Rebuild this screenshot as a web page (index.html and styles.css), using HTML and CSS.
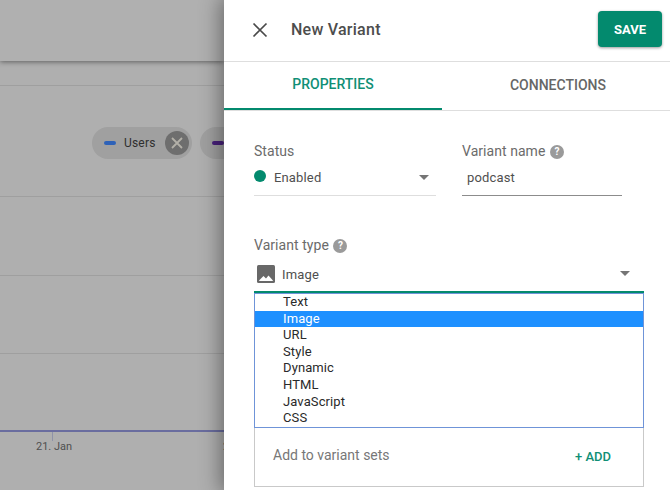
FILE: index.html
```html
<!DOCTYPE html>
<html lang="en">
<head>
<meta charset="utf-8">
<title>New Variant</title>
<link rel="stylesheet" href="styles.css">
</head>
<body>
<div class="app">
  <main class="chart">
    <div class="topbar"></div>
    <div class="band band-a"></div>
    <div class="band band-b">
      <div class="chips">
        <div class="chip">
          <span class="dash dash-blue"></span><span class="chip-label">Users</span>
          <span class="chip-close"><svg width="14" height="14" viewBox="0 0 14 14"><path d="M2 2 12 12M12 2 2 12" stroke="#b3b0a8" stroke-width="1.8" fill="none"/></svg></span>
        </div>
        <div class="chip chip-second"><span class="dash dash-purple"></span></div>
      </div>
    </div>
    <div class="band band-c"></div>
    <div class="band band-d"></div>
    <div class="band band-e"></div>
    <div class="axis">
      <div class="tick-group"><span class="tick"></span><span class="tick-label">21. Jan</span></div>
      <span class="tick-label next">2</span>
    </div>
  </main>

  <aside class="panel">
    <header class="panel-head">
      <svg class="close-icon" width="16" height="16" viewBox="0 0 16 16"><path d="M1.5 1.5 14.500 14.500M14.500 1.500 1.500 14.500" stroke="#4a4a4a" stroke-width="1.700" fill="none"/></svg>
      <h1 class="panel-title">New Variant</h1>
      <button class="save">SAVE</button>
    </header>
    <nav class="tabs">
      <div class="tab tab-active">PROPERTIES</div>
      <div class="tab tab-other">CONNECTIONS</div>
    </nav>
    <section class="form">
      <div class="row">
        <div class="field field-status">
          <div class="label">Status</div>
          <div class="control control-status">
            <span class="dot"></span><span class="value">Enabled</span><span class="caret"></span>
          </div>
        </div>
        <div class="field field-name">
          <div class="label">Variant name <span class="help">?</span></div>
          <div class="control control-name"><span class="value">podcast</span></div>
        </div>
      </div>
      <div class="label label-type">Variant type <span class="help">?</span></div>
      <div class="type-select">
        <svg class="image-icon" width="18" height="18" viewBox="0 0 18 18"><rect width="18" height="18" rx="1.500" fill="#686868"/><path d="M2 16 2.500 15 6.500 11 9 13.500 11.500 10.500 15.500 15 16 16Z" fill="#fff"/></svg>
        <span class="value">Image</span><span class="caret"></span>
      </div>
      <div class="listbox-wrap">
        <ul class="listbox">
          <li>Text</li>
          <li class="selected">Image</li>
          <li>URL</li>
          <li>Style</li>
          <li>Dynamic</li>
          <li>HTML</li>
          <li>JavaScript</li>
          <li>CSS</li>
        </ul>
        <div class="sets">
          <span class="sets-label">Add to variant sets</span>
          <span class="sets-add">+ ADD</span>
        </div>
      </div>
    </section>
  </aside>
</div>
</body>
</html>
```
FILE: styles.css
```css
* { box-sizing: border-box; }
html, body { margin: 0; padding: 0; height: 100%; overflow: hidden; }
body { font-family: Roboto, "Liberation Sans", sans-serif; color: #333; background: #fff; }
.app { display: flex; width: 670px; height: 490px; overflow: hidden; }

.chart { width: 224px; flex: none; background: #afafaf; display: flex; flex-direction: column; }
.topbar { height: 61px; flex: none; background: #b0b0b0; box-shadow: 0 1px 5px rgba(0,0,0,.45); position: relative; }
.band { flex: none; border-bottom: 1px solid #9f9f9f; }
.band-a { height: 25px; }
.band-b { height: 111px; padding-top: 41px; }
.band-c { height: 79px; }
.band-d { height: 78px; }
.band-e { height: 78px; border-bottom: 2px solid #6a6d9f; }

.chips { display: flex; gap: 8px; padding-left: 92px; width: 400px; }
.chip { flex: none; display: flex; align-items: center; width: 100px; height: 32px; border-radius: 16px; background: #a0a0a0; padding: 0 3px 0 12px; }
.chip-second { width: 60px; }
.dash { width: 12px; height: 4px; border-radius: 2px; flex: none; }
.dash-blue { background: #2e62b8; }
.dash-purple { background: #47207a; }
.chip-label { font-size: 12px; color: #2f2f2f; margin-left: 8px; letter-spacing: .2px; }
.chip-close { width: 24px; height: 24px; border-radius: 50%; background: #6e6e6e; display: flex; align-items: center; justify-content: center; margin-left: auto; }

.axis { display: flex; height: 40px; padding-left: 36px; gap: 151px; width: 300px; }
.tick-group { display: flex; flex-direction: column; width: 36px; flex: none; }
.tick { width: 1px; height: 9px; background: #8f93a8; margin-left: 16px; }
.tick-label { font-size: 11px; color: #4f4f4f; line-height: 12px; white-space: nowrap; }
.next { margin-top: 9px; }

.panel { width: 446px; flex: none; background: #fff; display: flex; flex-direction: column; box-shadow: 0 0 20px 3px rgba(0,0,0,.42); position: relative; z-index: 2; }
.panel-head { height: 62px; flex: none; display: flex; align-items: center; padding: 0 8px 0 28px; border-bottom: 1px solid #dedede; }
.close-icon { flex: none; margin-top: -2px; }
.panel-title { margin: -2px 0 0 23px; font-size: 16px; font-weight: 500; color: #4d4d4d; letter-spacing: .25px; }
.save { margin-left: auto; margin-top: -3px; width: 64px; height: 36px; border: 0; border-radius: 4px; background: #038a6e; color: #fff; font: 700 13px Roboto, sans-serif; box-shadow: 0 1px 3px rgba(0,0,0,.4); }

.tabs { display: flex; height: 49px; flex: none; border-bottom: 1px solid #dedede; }
.tab { display: flex; align-items: center; justify-content: center; padding-bottom: 2px; font-size: 14px; font-weight: 500; color: #666; }
.tab-active { width: 218px; height: 48px; color: #108f76; border-bottom: 2px solid #038a6e; }
.tab-other { width: 228px; padding-left: 4px; }

.form { padding: 31px 26px 0 30px; display: flex; flex-direction: column; }
.row { display: flex; gap: 26px; }
.label { font-size: 14px; line-height: 18px; height: 18px; color: #6b6b6b; letter-spacing: .05px; }
.help { display: inline-flex; width: 14px; height: 14px; border-radius: 50%; background: #9a9a9a; color: #fff; font-size: 10px; font-weight: 700; align-items: center; justify-content: center; vertical-align: 1px; margin-left: 1px; letter-spacing: 0; }
.field-status { width: 182px; flex: none; }
.field-name { width: 160px; flex: none; }
.control { display: flex; align-items: center; height: 36px; padding-bottom: 1px; }
.control-status { border-bottom: 1px solid #dedede; }
.control-name { border-bottom: 1px solid #8c8c8c; padding-left: 5px; }
.value { font-size: 13px; color: #4f4f4f; letter-spacing: .15px; }
.dot { width: 12px; height: 12px; border-radius: 50%; background: #038a6e; margin-right: 8px; flex: none; margin-top: -3px; }
.control .caret { margin-top: 1px; }
.caret { width: 0; height: 0; border-left: 5px solid transparent; border-right: 5px solid transparent; border-top: 5px solid #757575; margin-left: auto; margin-right: 7px; }
.label-type { margin-top: 40px; }
.type-select { display: flex; align-items: center; height: 39px; padding: 3px 7px 0 3px; border-bottom: 2px solid #038a6e; width: 390px; }
.type-select .value { margin-left: 7px; }
.type-select .caret { margin-top: -1px; }
.image-icon { flex: none; }

.listbox-wrap { width: 390px; }
.listbox { list-style: none; margin: 0; padding: 0; border: 1px solid #6f94d8; background: #fff; }
.listbox li { height: 16.6px; line-height: 16.6px; padding-left: 28px; font-size: 13px; color: #2a2a2a; letter-spacing: .1px; }
.listbox .selected { background: #1e90ff; color: #fff; }
.sets { height: 59px; display: flex; align-items: center; justify-content: space-between; padding: 0 32px 3px 18px; border: 1px solid #c9c9c9; border-top: 0; }
.sets-label { font-size: 14px; color: #777; }
.sets-add { font-size: 13px; font-weight: 500; color: #108f76; margin-top: 3px; }
```
